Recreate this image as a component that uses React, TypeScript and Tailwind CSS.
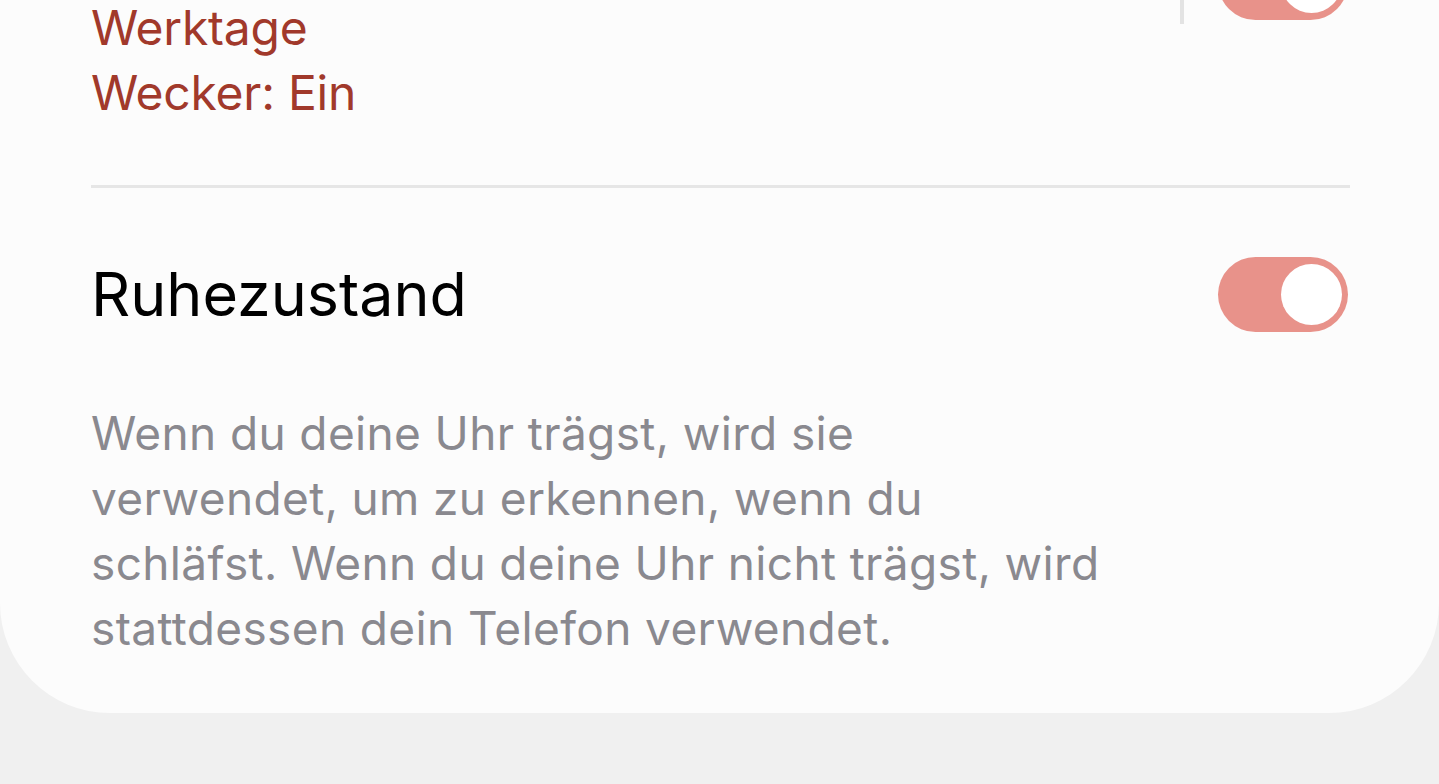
function Toggle() {
  return (
    <div className="mr-[2px] flex h-[75px] w-[130px] shrink-0 items-center justify-end rounded-full bg-[#e8928a] pr-[6px]">
      <div className="h-[61px] w-[61px] rounded-full bg-white" />
    </div>
  )
}

export default function App() {
  return (
    <div className="h-[784px] w-full overflow-hidden bg-[#f0f0f0] font-['Inter','Noto_Sans',sans-serif]">
      <div className="rounded-b-[110px] bg-[#fcfcfc] pb-[52px] pl-[91px] pr-[89px]">
        {/* Zeitplan (oben abgeschnitten) */}
        <div className="flex">
          <div className="flex flex-1 flex-col gap-[10px] text-[48px] leading-[55px] tracking-[-0.005em] text-[#a1392b]">
            <div>Werktage</div>
            <div>Wecker: Ein</div>
          </div>
          <div className="-mt-[60px] flex h-[84px] items-center gap-[34px]">
            <div className="h-full w-[4px] bg-[#e3e3e3]" />
            <Toggle />
          </div>
        </div>

        <div className="mt-[65px] h-[3px] bg-[#e6e6e6]" />

        {/* Ruhezustand */}
        <div className="mt-[69px] flex h-[75px] items-center justify-between">
          <span className="text-[61px] leading-none text-black">Ruhezustand</span>
          <Toggle />
        </div>

        <p className="mt-[69px] text-[46px] leading-[65px] tracking-[0.008em] text-[#8a898f]">
          Wenn du deine Uhr trägst, wird sie
          <br />
          verwendet, um zu erkennen, wenn du
          <br />
          schläfst. Wenn du deine Uhr nicht trägst, wird
          <br />
          stattdessen dein Telefon verwendet.
        </p>
      </div>
    </div>
  )
}
